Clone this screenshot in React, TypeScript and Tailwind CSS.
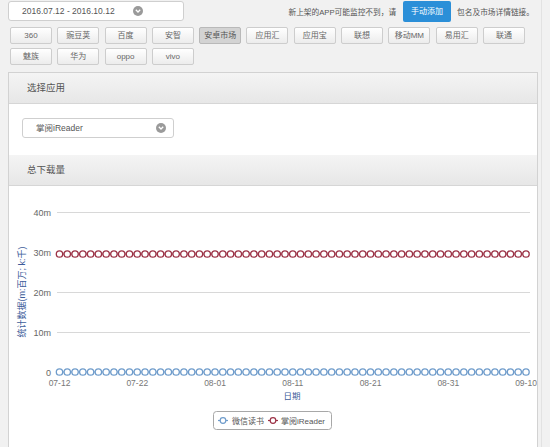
import React from "react";

const FONT = { fontFamily: '"Liberation Sans", "Noto Sans CJK SC", sans-serif' };

const MARKETS = [
  "360", "豌豆荚", "百度", "安智", "安卓市场", "应用汇", "应用宝", "联想", "移动MM", "易用汇", "联通",
  "魅族", "华为", "oppo", "vivo",
];

function DropCircle() {
  return (
    <span className="flex h-[10px] w-[10px] items-center justify-center rounded-full bg-[#9a9a9a]">
      <svg width="6" height="4" viewBox="0 0 6 4">
        <path d="M0.8 0.8 L3 3 L5.2 0.8" fill="none" stroke="#fff" strokeWidth="1.3" />
      </svg>
    </span>
  );
}

function PanelHeader({ title }: { title: string }) {
  return (
    <div className="flex h-[31px] items-center border-b border-[#d6d6d6] bg-gradient-to-b from-[#f4f4f4] to-[#e7e7e7] pl-[18px] text-[9.5px] text-[#555]">
      {title}
    </div>
  );
}

const N = 61;
const X0 = 50.5;
const STEP = 7.775;
const xs = Array.from({ length: N }, (_, i) => X0 + i * STEP);
const GRID = [
  { label: "40m", y: 26.5 },
  { label: "30m", y: 66.5 },
  { label: "20m", y: 106.5 },
  { label: "10m", y: 146.5 },
];
const XLABELS = ["07-12", "07-22", "08-01", "08-11", "08-21", "08-31", "09-10"];

function Series({ y, color }: { y: number; color: string }) {
  return (
    <g>
      <line x1={xs[0]} y1={y} x2={xs[N - 1]} y2={y} stroke={color} strokeWidth="1.2" />
      {xs.map((x, i) => (
        <circle key={i} cx={x} cy={y} r="3.2" fill="#fff" stroke={color} strokeWidth="1.3" />
      ))}
    </g>
  );
}

function Chart() {
  const red = "#9c3246";
  const blue = "#6f9ccb";
  return (
    <svg width="528" height="262" viewBox="0 0 528 262" style={FONT}>
      {GRID.map((g) => (
        <g key={g.label}>
          <line x1="48" y1={g.y} x2="521" y2={g.y} stroke="#d8d8d8" strokeWidth="1" />
          <text x="42" y={g.y + 3} textAnchor="end" fontSize="9" fill="#666">
            {g.label}
          </text>
        </g>
      ))}
      <text x="42" y="189.5" textAnchor="end" fontSize="9" fill="#666">
        0
      </text>
      <text
        x="0"
        y="0"
        transform="translate(16 106) rotate(-90)"
        textAnchor="middle"
        fontSize="9"
        fill="#3d5d9a"
      >
        统计数据(m:百万; k:千)
      </text>
      <Series y={68} color={red} />
      <Series y={186} color={blue} />
      {XLABELS.map((l, i) => (
        <text key={l} x={X0 + i * 10 * STEP} y="200" textAnchor="middle" fontSize="8.5" fill="#777">
          {l}
        </text>
      ))}
      <text x="283" y="213" textAnchor="middle" fontSize="8.5" fill="#3d5d9a">
        日期
      </text>
      <rect x="204.5" y="225.5" width="118" height="18" rx="3" fill="#fff" stroke="#a8a8a8" />
      <line x1="209" y1="234.5" x2="219" y2="234.5" stroke={blue} strokeWidth="1.2" />
      <circle cx="214" cy="234.5" r="2.8" fill="#fff" stroke={blue} strokeWidth="1.2" />
      <text x="223" y="237.5" fontSize="8" fill="#555">
        微信读书
      </text>
      <line x1="259" y1="234.5" x2="269" y2="234.5" stroke={red} strokeWidth="1.2" />
      <circle cx="264" cy="234.5" r="2.8" fill="#fff" stroke={red} strokeWidth="1.2" />
      <text x="272" y="237.5" fontSize="8" fill="#555">
        掌阅iReader
      </text>
    </svg>
  );
}

export default function App() {
  return (
    <div className="h-[447px] w-[550px] overflow-hidden bg-[#f1f1f1]" style={FONT}>
      <div className="w-[542px] border-r border-[#e2e2e2]">
        <div className="flex h-[22px] items-start pt-[1px]">
          <div className="ml-[8px] flex h-[20px] w-[176px] items-center rounded-[3px] border border-[#cfcfcf] bg-white pl-[13px] text-[8.5px] text-[#555]">
            <span>2016.07.12 - 2016.10.12</span>
            <span className="ml-[18px]">
              <DropCircle />
            </span>
          </div>
          <div className="ml-auto mr-[7px] flex items-center text-[7.7px] text-[#555]">
            <span className="mt-[3px]">新上架的APP可能监控不到，请</span>
            <span className="ml-[7px] flex h-[21px] w-[48px] items-center justify-center rounded-[2px] bg-[#2b8fd8] text-[8px] text-white">
              手动添加
            </span>
            <span className="ml-[6px] mt-[3px]">包名及市场详情链接。</span>
          </div>
        </div>

        <div className="ml-[10px] mt-[5px] flex w-[520px] flex-wrap gap-x-[5.3px] gap-y-[4px]">
          {MARKETS.map((m) => (
            <div
              key={m}
              className={
                m === "安卓市场"
                  ? "flex h-[17px] w-[42px] items-center justify-center rounded-[2px] border border-[#b9b9b9] bg-[#d3d3d3] text-[8px] text-[#555]"
                  : "flex h-[17px] w-[42px] items-center justify-center rounded-[2px] border border-[#cdcdcd] bg-gradient-to-b from-white to-[#ececec] text-[8px] text-[#666]"
              }
            >
              {m}
            </div>
          ))}
        </div>

        <div className="ml-[8px] mt-[7px] w-[530px] border border-b-0 border-[#d2d2d2] bg-white">
          <PanelHeader title="选择应用" />
          <div className="pb-[17px] pl-[13px] pt-[14px]">
            <div className="flex h-[20px] w-[152px] items-center justify-between rounded-[3px] border border-[#cfcfcf] bg-white pl-[13px] pr-[7px] text-[8.5px] text-[#555]">
              <span>掌阅iReader</span>
              <DropCircle />
            </div>
          </div>
          <PanelHeader title="总下载量" />
          <Chart />
        </div>
      </div>
    </div>
  );
}
